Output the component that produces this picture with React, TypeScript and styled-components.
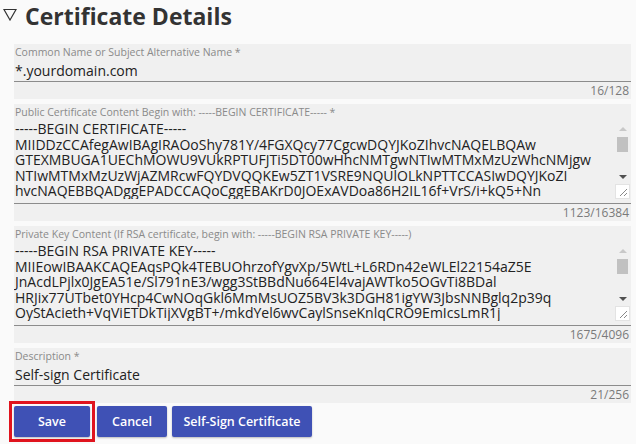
import React from "react";
import styled, { createGlobalStyle } from "styled-components";

const GlobalStyle = createGlobalStyle`
  html, body {
    margin: 0;
    padding: 0;
    background: #fafafa;
    font-family: "Open Sans", "Noto Sans", sans-serif;
  }
  * { box-sizing: border-box; }
`;

const Page = styled.div`
  width: 636px;
  height: 444px;
  overflow: hidden;
  padding: 0 5px 0 14px;
`;

const Heading = styled.h2`
  display: flex;
  align-items: center;
  gap: 8px;
  margin: 2px 0 0 -11px;
  height: 28px;
  line-height: 28px;
  font-size: 23px;
  font-weight: 700;
  color: #333;
  svg {
    flex: none;
    margin-top: -3px;
  }
`;

const Form = styled.form`
  display: flex;
  flex-direction: column;
  gap: 5px;
  margin-top: 14px;
`;

const Field = styled.div`
  background: #f0f0f0;
  padding-top: 2px;
`;

const Label = styled.label`
  display: block;
  height: 13px;
  line-height: 13px;
  font-size: 10.5px;
  color: #8a8a8a;
  white-space: nowrap;
  padding-left: 1px;
`;

const Input = styled.input`
  display: block;
  width: 100%;
  height: 23px;
  border: 0;
  border-bottom: 1px solid #8c8c8c;
  background: transparent;
  padding: 0 1px;
  font: inherit;
  font-size: 14px;
  color: #222;
  outline: none;
`;

const AreaBox = styled.div`
  display: flex;
  height: 85px;
  border-bottom: 1px solid #8c8c8c;
  padding-bottom: 4px;
`;

const Area = styled.textarea`
  flex: 1;
  min-width: 0;
  border: 0;
  background: transparent;
  padding: 2px 1px 0;
  font: inherit;
  font-size: 14px;
  line-height: 15.6px;
  color: #222;
  resize: none;
  overflow: hidden;
  white-space: pre;
  outline: none;
`;

const Scroll = styled.div`
  flex: none;
  width: 15px;
  display: flex;
  flex-direction: column;
  align-items: center;
  margin-right: 1px;
`;

const Arrow = styled.div<{ $down?: boolean; $dim?: boolean }>`
  height: 14px;
  display: flex;
  align-items: center;
  justify-content: center;
  &::after {
    content: "";
    border-left: 4px solid transparent;
    border-right: 4px solid transparent;
    ${(p) =>
      p.$down
        ? `border-top: 4px solid ${p.$dim ? "#c8c8c8" : "#505050"};`
        : `border-bottom: 4px solid ${p.$dim ? "#c8c8c8" : "#505050"};`}
  }
`;

const Track = styled.div`
  flex: 1;
  width: 100%;
  padding: 1px 2px;
`;

const Thumb = styled.div`
  width: 100%;
  height: 15px;
  background: #c1c1c1;
`;

const Grip = styled.div`
  width: 15px;
  height: 15px;
  background: #fff;
  border: 1px solid #e3e3e3;
  display: flex;
  align-items: flex-end;
  justify-content: flex-end;
  padding: 2px;
`;

const Counter = styled.div`
  height: 17px;
  line-height: 17px;
  text-align: right;
  font-size: 12px;
  color: #7a7a7a;
  padding-right: 2px;
`;

const Actions = styled.div`
  display: flex;
  align-items: center;
  gap: 5px;
  margin: -2px 0 0 -5px;
`;

const Marker = styled.div`
  display: flex;
  border: 3px solid #e0141e;
  padding: 2px;
  margin-right: -3px;
`;

const Button = styled.button<{ $w: number }>`
  flex: none;
  width: ${(p) => p.$w}px;
  height: 31px;
  padding: 0;
  border: 0;
  border-radius: 2px;
  background: #3f51b5;
  color: #fff;
  font-family: inherit;
  font-size: 12.5px;
  font-weight: 600;
  box-shadow: 0 1px 2px rgba(0, 0, 0, 0.25);
`;

const cert = `-----BEGIN CERTIFICATE-----
MIIDDzCCAfegAwIBAgIRAOoShy781Y/4FGXQcy77CgcwDQYJKoZIhvcNAQELBQAw
GTEXMBUGA1UEChMOWU9VUkRPTUFJTi5DT00wHhcNMTgwNTIwMTMxMzUzWhcNMjgw
NTIwMTMxMzUzWjAZMRcwFQYDVQQKEw5ZT1VSRE9NQUlOLkNPTTCCASIwDQYJKoZI
hvcNAQEBBQADggEPADCCAQoCggEBAKrD0JOExAVDoa86H2IL16f+VrS/i+kQ5+Nn`;

const key = `-----BEGIN RSA PRIVATE KEY-----
MIIEowIBAAKCAQEAqsPQk4TEBUOhrzofYgvXp/5WtL+L6RDn42eWLEl22154aZ5E
JnAcdLPjlx0JgEA51e/Sl791nE3/wgg3StBBdNu664El4vajAWTko5OGvTi8BDal
HRJix77UTbet0YHcp4CwNOqGkl6MmMsUOZ5BV3k3DGH81igYW3JbsNNBglq2p39q
OyStAcieth+VqViETDkTijXVgBT+/mkdYel6wvCaylSnseKnlqCRO9EmIcsLmR1j`;

const FakeScroll = () => (
  <Scroll>
    <Arrow $dim style={{ marginTop: 3 }} />
    <Track>
      <Thumb />
    </Track>
    <Arrow $down />
    <Grip>
      <svg width="8" height="8" viewBox="0 0 8 8">
        <path d="M1 8L8 1M5 8L8 5" stroke="#888" strokeWidth="1" />
      </svg>
    </Grip>
  </Scroll>
);

export default function App() {
  return (
    <Page>
      <GlobalStyle />
      <Heading>
        <svg width="14" height="13" viewBox="0 0 14 13">
          <path d="M1 1.5H13L7 12Z" fill="none" stroke="#333" strokeWidth="1.2" />
        </svg>
        Certificate Details
      </Heading>
      <Form>
        <Field>
          <Label>Common Name or Subject Alternative Name *</Label>
          <Input defaultValue="*.yourdomain.com" />
          <Counter>16/128</Counter>
        </Field>
        <Field>
          <Label>Public Certificate Content Begin with: -----BEGIN CERTIFICATE----- *</Label>
          <AreaBox>
            <Area readOnly value={cert} />
            <FakeScroll />
          </AreaBox>
          <Counter>1123/16384</Counter>
        </Field>
        <Field>
          <Label>Private Key Content (If RSA certificate, begin with: -----BEGIN RSA PRIVATE KEY-----)</Label>
          <AreaBox>
            <Area readOnly value={key} />
            <FakeScroll />
          </AreaBox>
          <Counter>1675/4096</Counter>
        </Field>
        <Field>
          <Label>Description *</Label>
          <Input defaultValue="Self-sign Certificate" />
          <Counter>21/256</Counter>
        </Field>
      </Form>
      <Actions>
        <Marker>
          <Button type="button" $w={76}>Save</Button>
        </Marker>
        <Button type="button" $w={70}>Cancel</Button>
        <Button type="button" $w={140}>Self-Sign Certificate</Button>
      </Actions>
    </Page>
  );
}
